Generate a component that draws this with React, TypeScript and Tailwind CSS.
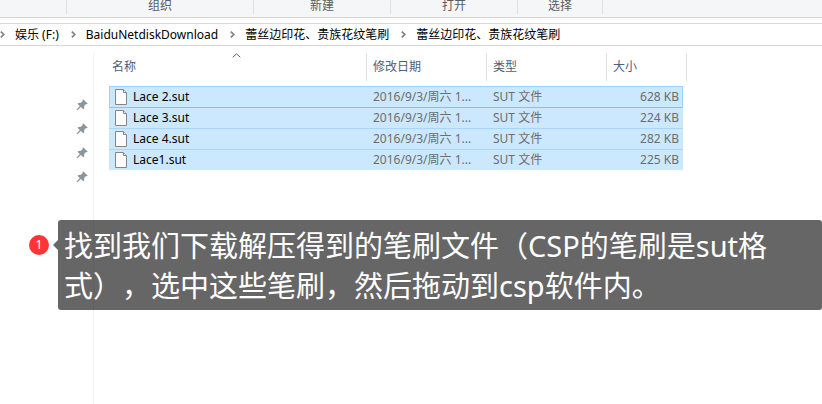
import { Fragment } from "react";

const RIBBON_GROUPS = [
  { label: "", className: "w-[67px]" },
  { label: "组织", className: "w-[187px]" },
  { label: "新建", className: "w-[137px]" },
  { label: "打开", className: "w-[127px]" },
  { label: "选择", className: "w-[85px]" },
];

const PATH = [
  "娱乐 (F:)",
  "BaiduNetdiskDownload",
  "蕾丝边印花、贵族花纹笔刷",
  "蕾丝边印花、贵族花纹笔刷",
];

const FILES = [
  { name: "Lace 2.sut", size: "628 KB" },
  { name: "Lace 3.sut", size: "224 KB" },
  { name: "Lace 4.sut", size: "282 KB" },
  { name: "Lace1.sut", size: "225 KB" },
];

const App: React.FC = () => {
  return (
    <div
      lang="zh-CN"
      className="relative flex min-h-screen flex-col bg-white text-xs text-black font-['Noto_Sans','Noto_Sans_CJK_SC',sans-serif]"
    >
      <Ribbon />
      <AddressBar />
      <div className="flex flex-1 pt-[7px]">
        <Sidebar />
        <main className="min-w-0 flex-1 pl-[15px]">
          <FileTable />
        </main>
      </div>
      <Callout />
    </div>
  );
};

export default App;

const Ribbon: React.FC = () => {
  return (
    <div className="flex h-[18px] shrink-0 border-b border-[#d5d6d7] bg-[#f5f6f7] leading-3 text-[#5a5d61]">
      {RIBBON_GROUPS.map((group, i) => (
        <div
          key={i}
          className={`h-[14px] shrink-0 border-r border-[#dfe0e2] text-center ${group.className}`}
        >
          {group.label}
        </div>
      ))}
    </div>
  );
};

const AddressBar: React.FC = () => {
  return (
    <nav className="mt-[5px] flex h-[23px] shrink-0 items-center border-y border-[#d5d5d5] leading-5 whitespace-nowrap">
      {PATH.map((part, i) => (
        <Fragment key={i}>
          <Chevron className={i ? "mr-[10px] ml-3" : "mr-[10px]"} />
          <button type="button">{part}</button>
        </Fragment>
      ))}
    </nav>
  );
};

const Sidebar: React.FC = () => {
  return (
    <aside className="flex w-[94px] shrink-0 flex-col items-end gap-3 border-r border-[#f3f3f3] pt-[46px] pr-[5px]">
      {[0, 1, 2, 3].map((i) => (
        <Pin key={i} />
      ))}
    </aside>
  );
};

const FileTable: React.FC = () => {
  return (
    <table className="w-[578px] table-fixed border-separate border-spacing-0 text-left leading-5 whitespace-nowrap">
      <colgroup>
        <col className="w-[258px]" />
        <col className="w-[120px]" />
        <col className="w-[120px]" />
        <col className="w-[76px]" />
        <col className="w-1" />
      </colgroup>
      <thead className="text-[#4c607a]">
        <tr className="h-7">
          <th className="relative border-r border-[#e2e2e2] pl-[3px] font-normal">
            <svg
              className="absolute top-0 left-[123px] h-[5px] w-[9px]"
              viewBox="0 0 9 5"
              fill="none"
              stroke="#606060"
            >
              <path d="M.7 4.3 4.5.8l3.8 3.5" />
            </svg>
            <button type="button">名称</button>
          </th>
          <th className="border-r border-[#e2e2e2] pl-[6px] font-normal">
            <button type="button">修改日期</button>
          </th>
          <th className="border-r border-[#e2e2e2] pl-[6px] font-normal">
            <button type="button">类型</button>
          </th>
          <th className="pl-[6px] font-normal">
            <button type="button">大小</button>
          </th>
          <td className="border-r border-[#e2e2e2]" />
        </tr>
        <tr className="h-[5px]" />
      </thead>
      <tbody className="text-[#6d6d6d]">
        {FILES.map((file, i) => (
          <FileRow key={file.name} {...file} index={i} />
        ))}
      </tbody>
    </table>
  );
};

interface FileRowProps {
  name: string;
  size: string;
  index: number;
}

const FileRow: React.FC<FileRowProps> = ({ name, size, index }) => {
  // the focused row keeps a stronger outline than the other selected ones
  const focused = index === 0;
  const border =
    index === 1
      ? "border-t-[#84c3ee]"
      : index === 0
        ? "border-t-[#99d1ff]"
        : "border-t-[#a8d5fb]";
  const side = focused ? "border-x-[#99d1ff]" : "border-x-[#cce8ff]";
  const cell = `h-[21px] border-t bg-[#cce8ff] p-0 ${border}`;

  return (
    <tr>
      <td className={`${cell} border-l ${side}`}>
        <div className="flex items-center gap-[6px] pl-[5px] text-black">
          <FileIcon />
          <span>{name}</span>
        </div>
      </td>
      <td className={cell}>
        <div className="pl-[6px]">2016/9/3/周六 1...</div>
      </td>
      <td className={cell}>
        <div className="pl-[6px]">SUT 文件</div>
      </td>
      <td className={`${cell} border-r text-right ${side}`}>
        <div className="pr-[3px]">{size}</div>
      </td>
    </tr>
  );
};

const Callout: React.FC = () => {
  return (
    <div className="absolute top-[220px] right-0 left-[29px] flex items-start">
      <span className="mt-[15px] flex size-5 shrink-0 items-center justify-center rounded-full bg-[#ff3434] text-[13px] text-white">
        1
      </span>
      <svg
        className="mt-5 ml-1 h-[10px] w-[5px] shrink-0"
        viewBox="0 0 5 10"
        fill="#000"
        fillOpacity=".6"
      >
        <path d="M5 0v10L0 5z" />
      </svg>
      <p className="flex-1 rounded-[3px] bg-black/60 px-[6px] pt-[6px] pb-1 text-[29px] leading-10 text-white [text-spacing-trim:space-all]">
        找到我们下载解压得到的笔刷文件（CSP的笔刷是sut格式），选中这些笔刷，然后拖动到csp软件内。
      </p>
    </div>
  );
};

const Chevron: React.FC<{ className?: string }> = ({ className }) => {
  return (
    <svg
      className={`h-[7px] w-[5px] shrink-0 ${className || ""}`}
      viewBox="0 0 5 7"
      fill="none"
      stroke="#808080"
      strokeWidth="1.7"
    >
      <path d="M.8.6 3.8 3.5.8 6.4" />
    </svg>
  );
};

const Pin: React.FC = () => {
  return (
    <svg className="size-3 shrink-0" viewBox="0 0 12 12" fill="#8c949d">
      <path d="M7.2.3 11.8 4.7 11 5.3 9.9 5.1 8.2 7 8.1 9.4 7.2 10.2 4.9 8 1.2 11.4.5 10.8 3.8 7 1.5 4.9 2.3 4 4.9 3.8 6.8 2.1 6.5 1Z" />
    </svg>
  );
};

const FileIcon: React.FC = () => {
  return (
    <svg
      className="h-4 w-3 shrink-0"
      viewBox="0 0 12 16"
      fill="#fcfcfc"
      stroke="#858585"
    >
      <path d="M.5.5h7.8l3.2 3.2v11.8H.5z" />
      <path d="M8.5.8v2.7h2.8" fill="#eee" />
    </svg>
  );
};
